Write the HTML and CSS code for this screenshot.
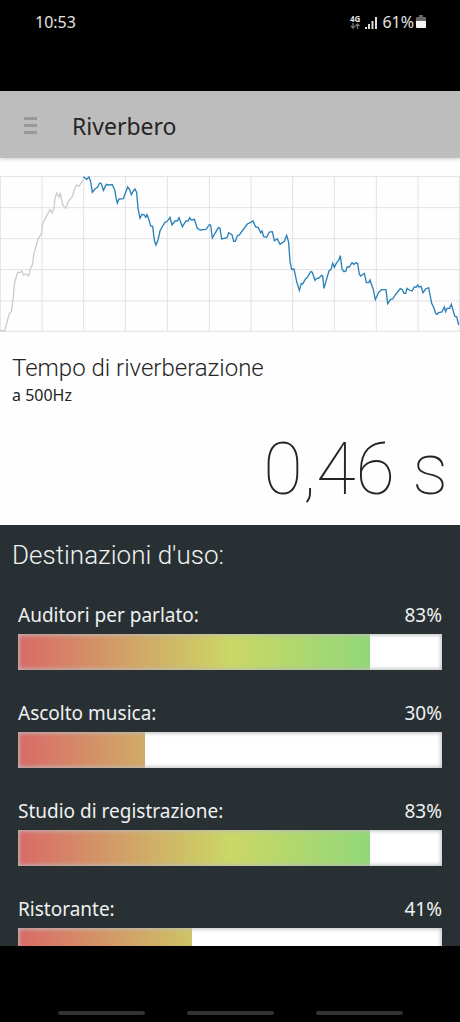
FILE: index.html
```html
<!DOCTYPE html>
<html lang="it">
<head>
<meta charset="utf-8">
<meta name="viewport" content="width=device-width, initial-scale=1">
<title>Riverbero</title>
<link rel="stylesheet" href="styles.css">
</head>
<body class="screen">
<div class="status-bar">
  <time class="status-time">10:53</time>
  <div class="status-icons">
    <span class="network"><span>4G</span>
      <svg class="arrows" viewBox="0 0 10 6" aria-hidden="true"><path d="M3 0v4M1 3l2 2 2-2M7.500 6V2M5.500 3l2-2 2 2" fill="none" stroke="#777" stroke-width="1.300"/></svg>
    </span>
    <svg class="signal" viewBox="0 0 12 13" aria-hidden="true"><path d="M0 11h2v2H0zM3 8h2v5H3zM6.500 5h2v8h-2zM10 1h2v12h-2z" fill="#ddd"/></svg>
    <span>61%</span>
    <svg class="battery" viewBox="0 0 10 14" aria-hidden="true"><path d="M3 0h4v2h2q1 0 1 1v3H0V3q0-1 1-1h2z" fill="#666"/><path d="M0 6h10v6q0 1-1 1H1q-1 0-1-1z" fill="#f4f4f4"/></svg>
  </div>
</div>
<header class="app-bar">
  <button class="menu" type="button" aria-label="Menu"><span class="menu-line"></span><span class="menu-line"></span><span class="menu-line"></span></button>
  <h1 class="title">Riverbero</h1>
</header>
<main class="content">
  <section class="result">
    <svg class="chart" viewBox="0 33 1380 468" preserveAspectRatio="none" role="img" aria-label="Decadimento sonoro">
      <path class="grid" d="M1 35V499M126 35V499M251 35V499M376 35V499M502 35V499M628 35V499M753 35V499M878 35V499M1003 35V499M1129 35V499M1254 35V499M1378 35V499M0 35H1380M0 128H1380M0 221H1380M0 314H1380M0 408H1380M0 499H1380"/>
      <polyline class="rise" points="0,497 14,498 28,445 34,440 40,395 44,352 53,322 60,323 66,318 70,330 76,327 86,332 92,308 97,300 102,265 115,220 124,207 128,175 136,160 150,134 156,144 162,128 165,100 170,84 177,97 181,84 188,120 197,130 205,110 218,93 222,75 230,60 237,64 250,44"/>
      <polyline class="decay" points="250,35 260,43 267,36 272,50 277,82 285,72 293,66 299,54 304,56 310,76 319,58 325,60 337,59 344,74 348,98 352,115 357,102 370,101 376,85 383,66 389,74 394,89 400,78 405,72 410,82 414,130 420,160 426,148 433,150 437,157 441,149 447,165 452,183 458,184 463,225 468,240 474,225 480,198 488,183 495,172 502,169 510,157 516,180 525,168 532,168 537,158 547,185 558,168 564,168 569,158 574,165 583,163 592,190 600,195 618,193 628,179 632,180 637,219 645,205 655,188 660,190 665,222 681,218 686,203 696,209 701,229 706,229 712,212 718,210 742,177 752,172 759,168 767,186 775,188 782,203 786,198 791,215 800,217 808,201 817,200 823,227 832,222 840,238 853,229 860,211 866,232 870,290 875,313 882,312 890,350 898,376 904,356 908,357 915,344 922,337 932,320 937,322 945,346 950,340 956,340 965,331 968,333 972,370 982,335 987,318 993,313 998,295 1003,307 1010,293 1016,286 1021,272 1026,312 1032,320 1038,318 1041,306 1048,306 1056,293 1062,298 1068,293 1073,296 1078,328 1082,333 1093,325 1099,353 1106,353 1110,345 1120,374 1126,404 1136,382 1145,374 1158,374 1163,416 1172,403 1178,402 1188,387 1201,371 1206,373 1212,385 1217,385 1221,370 1228,375 1236,378 1243,366 1249,366 1253,360 1257,366 1263,364 1269,383 1277,372 1286,368 1295,415 1301,427 1307,445 1311,448 1316,443 1326,441 1333,426 1337,440 1341,430 1349,430 1354,418 1362,446 1365,455 1370,455 1376,480"/>
    </svg>
    <div class="reading">
      <h2 class="reading-title">Tempo di riverberazione</h2>
      <p class="reading-note">a 500Hz</p>
      <p class="reading-value">0,46 s</p>
    </div>
  </section>
  <section class="uses">
    <h2 class="uses-title">Destinazioni d'uso:</h2>
    <div class="use">
      <div class="use-label"><span id="u1">Auditori per parlato:</span><span>83%</span></div>
      <div class="bar" role="meter" aria-labelledby="u1" aria-valuenow="83" aria-valuemin="0" aria-valuemax="100"><div class="rest" style="width:17%"></div></div>
    </div>
    <div class="use">
      <div class="use-label"><span id="u2">Ascolto musica:</span><span>30%</span></div>
      <div class="bar" role="meter" aria-labelledby="u2" aria-valuenow="30" aria-valuemin="0" aria-valuemax="100"><div class="rest" style="width:70%"></div></div>
    </div>
    <div class="use">
      <div class="use-label"><span id="u3">Studio di registrazione:</span><span>83%</span></div>
      <div class="bar" role="meter" aria-labelledby="u3" aria-valuenow="83" aria-valuemin="0" aria-valuemax="100"><div class="rest" style="width:17%"></div></div>
    </div>
    <div class="use">
      <div class="use-label"><span id="u4">Ristorante:</span><span>41%</span></div>
      <div class="bar" role="meter" aria-labelledby="u4" aria-valuenow="41" aria-valuemin="0" aria-valuemax="100"><div class="rest" style="width:59%"></div></div>
    </div>
  </section>
</main>
<nav class="nav-bar" aria-label="Navigazione di sistema">
  <button class="nav-hint" type="button" aria-label="Recenti"></button>
  <button class="nav-hint" type="button" aria-label="Home"></button>
  <button class="nav-hint" type="button" aria-label="Indietro"></button>
</nav>
</body>
</html>
```

FILE: styles.css
```css
* {
  box-sizing: border-box;
}

h1, h2, p {
  margin: 0;
  font-weight: 400;
}

button {
  border: 0;
  padding: 0;
  background: none;
}

.screen {
  display: flex;
  flex-direction: column;
  height: 100vh;
  margin: 0;
  background: #000;
  color: #252525;
  font-family: Roboto, "Noto Sans", sans-serif;
}

.status-bar {
  display: flex;
  justify-content: space-between;
  align-items: flex-start;
  flex: none;
  height: 91px;
  padding: 12px 34px 0 35px;
  color: #e4e4e4;
  font-family: "Noto Sans", sans-serif;
  font-size: 16px;
  line-height: 20px;
}

.status-icons {
  display: flex;
  align-items: center;
  gap: 5px;
}

.network {
  display: flex;
  flex-direction: column;
  align-items: center;
  font-size: 8px;
  font-weight: 700;
  line-height: 8px;
}

.arrows {
  width: 10px;
  height: 6px;
}

.signal {
  width: 12px;
  height: 13px;
}

.battery {
  width: 10px;
  height: 14px;
  margin-left: -3px;
}

.app-bar {
  display: flex;
  align-items: center;
  gap: 35px;
  flex: none;
  height: 67px;
  padding: 2px 24px 0;
  background: #bdbdbd;
  box-shadow: 0 1px 4px rgba(0, 0, 0, 0.2);
  z-index: 1;
}

.menu {
  display: flex;
  flex-direction: column;
  gap: 4px;
  width: 13px;
}

.menu-line {
  height: 3px;
  background: #999;
}

.title {
  font-family: "Noto Sans", sans-serif;
  font-size: 23px;
  line-height: 32px;
}

.content {
  flex: 1;
  min-height: 0;
  overflow: hidden;
  background: #293033;
}

.result {
  padding-top: 18px;
  background: #fefefe;
}

.chart {
  display: block;
  width: 100%;
  height: 156px;
}

.chart * {
  fill: none;
}

.grid {
  stroke: #e2e2e2;
  stroke-width: 1px;
  vector-effect: non-scaling-stroke;
}

.rise {
  stroke: #ccc;
  stroke-width: 4;
}

.decay {
  stroke: #2a80b9;
  stroke-width: 4;
}

.reading {
  padding: 20px 12px 11px;
}

.reading-title {
  font-size: 24px;
  font-weight: 300;
  line-height: 32px;
}

.reading-note {
  font-family: "Noto Sans", sans-serif;
  font-size: 16px;
  line-height: 22px;
}

.reading-value {
  padding-top: 20px;
  font-size: 72px;
  font-weight: 100;
  line-height: 88px;
  text-align: right;
}

.uses {
  padding: 13px 18px 0;
  color: #eef1f2;
}

.uses-title {
  margin: 0 0 28px -6px;
  font-size: 26px;
  font-weight: 300;
  line-height: 34px;
}

.use {
  margin-bottom: 28px;
}

.use-label {
  display: flex;
  justify-content: space-between;
  padding-bottom: 4px;
  font-family: "Noto Sans", sans-serif;
  font-size: 19px;
  line-height: 30px;
}

.bar {
  position: relative;
  display: flex;
  justify-content: flex-end;
  height: 36px;
  background: linear-gradient(to right, #d96a68, #cbd766 50%, #74d880);
}

.bar::after {
  content: "";
  position: absolute;
  inset: 0;
  box-shadow: inset 0 0 4px 1px #bbb;
}

.rest {
  background: #fff;
}

.nav-bar {
  display: flex;
  justify-content: center;
  align-items: flex-end;
  gap: 42px;
  flex: none;
  height: 76px;
  padding-bottom: 7px;
}

.nav-hint {
  width: 87px;
  height: 4px;
  border-radius: 2px;
  background: #333;
}
```
